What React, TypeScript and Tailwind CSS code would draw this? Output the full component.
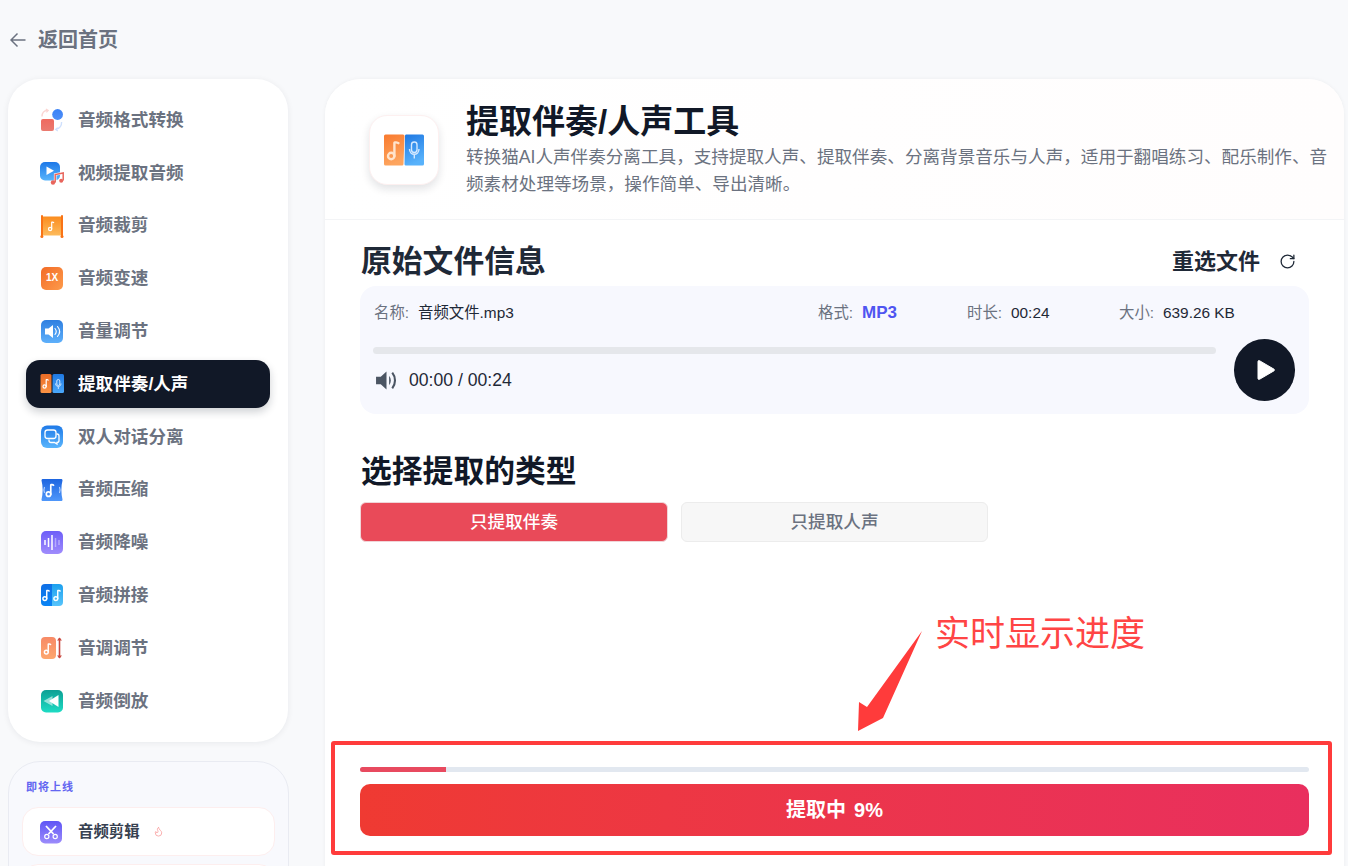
import React from "react";
import { RotateCw, Flame } from "lucide-react";

const FONT = '"Liberation Sans","Noto Sans CJK SC",sans-serif';

function Grad({ id, a, b, x2 = 0, y2 = 1 }: { id: string; a: string; b: string; x2?: number; y2?: number }) {
  return (
    <linearGradient id={id} x1="0" y1="0" x2={x2} y2={y2}>
      <stop offset="0" stopColor={a} />
      <stop offset="1" stopColor={b} />
    </linearGradient>
  );
}

function Note({ x, y, s = 1, c = "#fff" }: { x: number; y: number; s?: number; c?: string }) {
  return (
    <g transform={`translate(${x} ${y}) scale(${s})`} fill="none" stroke={c} strokeWidth="1.2" strokeLinecap="round">
      <circle cx="-1.4" cy="3" r="1.6" />
      <path d="M0.2 3V-3.6c0-.4 1.6-.2 2 .2" />
    </g>
  );
}

function Svg({ children }: { children: React.ReactNode }) {
  return (
    <svg width="24" height="24" viewBox="0 0 24 24" className="shrink-0">
      {children}
    </svg>
  );
}

const icons: Record<string, React.ReactNode> = {
  format: (
    <Svg>
      <defs>
        <Grad id="f1" a="#ef6a5f" b="#ea7b70" />
        <Grad id="f2" a="#3b82f6" b="#4f8ff7" />
      </defs>
      <rect x="1" y="11" width="13" height="12" rx="2" fill="url(#f1)" />
      <circle cx="17.6" cy="6.5" r="5.4" fill="url(#f2)" />
      <path d="M2 8.5C2 5 4 2.6 7.5 2.4" fill="none" stroke="#fbd5d2" strokeWidth="1.4" />
      <path d="M5.8 1l2.4 1.4L6.4 4.4" fill="none" stroke="#fbd5d2" strokeWidth="1.2" />
      <path d="M21.6 14c0 4-2 6.6-5.6 7.4" fill="none" stroke="#cfe0fd" strokeWidth="1.4" />
      <path d="M17.6 19.6l-2 1.9 2.2 1.4" fill="none" stroke="#cfe0fd" strokeWidth="1.2" />
    </Svg>
  ),
  video: (
    <Svg>
      <defs>
        <Grad id="v1" a="#1d78e8" b="#58b4fb" />
      </defs>
      <rect x="0" y="1" width="20" height="18.500" rx="5" fill="url(#v1)" />
      <path d="M6.500 5.500v8.500l7.500-4.200z" fill="#fff" />
      <path d="M15.200 21.500v-8l8-1.500v7.500" fill="none" stroke="#fff" strokeWidth="2.600" />
      <path d="M15.200 21.500v-8l8-1.500v7.500" fill="none" stroke="#e8655c" strokeWidth="1.500" />
      <circle cx="13" cy="21.500" r="2.200" fill="#e8655c" />
      <circle cx="21.200" cy="19.700" r="2" fill="#e8655c" />
    </Svg>
  ),
  crop: (
    <Svg>
      <defs>
        <Grad id="c1" a="#fb8c1e" b="#fdbb5c" />
      </defs>
      <rect x="1.500" y="2.500" width="21" height="19" fill="url(#c1)" />
      <rect x="1" y="1" width="2" height="22" rx="1" fill="#f97316" />
      <rect x="21" y="1" width="2" height="22" rx="1" fill="#f97316" />
      <circle cx="1.900" cy="22.500" r="1.500" fill="#f97316" />
      <circle cx="22" cy="22.500" r="1.500" fill="#f97316" />
      <Note x={11.500} y={12} />
    </Svg>
  ),
  volume: (
    <Svg>
      <defs>
        <Grad id="o1" a="#2f7fe0" b="#5eb0fb" />
      </defs>
      <rect x="1" y="1" width="22" height="23" rx="5" fill="url(#o1)" />
      <path d="M5 9.500h3.500L13 6v13l-4.500-3.500H5z" fill="#fff" />
      <path d="M15 9.500c1.500 1.800 1.500 4.200 0 6M17.500 7.500c2.600 3 2.600 7 0 10" fill="none" stroke="#fff" strokeWidth="1.100" strokeLinecap="round" />
    </Svg>
  ),
  sep: (
    <Svg>
      <defs>
        <Grad id="s1" a="#ea6c26" b="#fb9344" />
        <Grad id="s2" a="#1f78e2" b="#4aa8fb" />
      </defs>
      <rect x="0.500" y="2" width="11" height="19" rx="1.500" fill="url(#s1)" />
      <rect x="12.500" y="2" width="11.500" height="19" rx="1.500" fill="url(#s2)" />
      <Note x={6} y={11.500} />
      <rect x="16.800" y="7.500" width="3" height="6" rx="1.500" fill="none" stroke="#cfe6ff" strokeWidth="1" />
      <path d="M15.500 11.500c0 4 5.500 4 5.500 0M18.300 15v2" fill="none" stroke="#cfe6ff" strokeWidth="1" />
    </Svg>
  ),
  chat: (
    <Svg>
      <defs>
        <Grad id="h1" a="#1f7ae8" b="#5ab5fc" />
      </defs>
      <rect x="1" y="0.500" width="22" height="22.500" rx="6" fill="url(#h1)" />
      <rect x="5" y="5" width="11" height="8.500" rx="2.500" fill="none" stroke="#fff" strokeWidth="1.300" />
      <path d="M16.500 9h.5a2 2 0 0 1 2 2v4.500a2 2 0 0 1-2 2v1.500l-2.500-1.500H11a2 2 0 0 1-2-2v-1" fill="none" stroke="#fff" strokeWidth="1.300" />
    </Svg>
  ),
  compress: (
    <Svg>
      <defs>
        <Grad id="p1" a="#1d65e0" b="#4f97fa" />
      </defs>
      <path d="M3 1h18c1 0 1.500.5 1.500 1.500-1.500 5.500-1.500 13.500 0 19 0 1-.5 1.500-1.500 1.500H3c-1 0-1.500-.5-1.500-1.500 1.500-5.500 1.500-13.500 0-19C1.500 1.500 2 1 3 1z" fill="url(#p1)" />
      <Note x={10.500} y={12} s={1.400} />
      <path d="M4.500 9c-.8 2-.8 4 0 6M19.500 9c.8 2 .8 4 0 6" fill="none" stroke="#bcd6ff" strokeWidth="1.100" />
    </Svg>
  ),
  noise: (
    <Svg>
      <defs>
        <Grad id="n1" a="#6d5ef8" b="#a08cfc" />
      </defs>
      <rect x="1" y="1" width="22" height="23" rx="5" fill="url(#n1)" />
      <g stroke="#fff" strokeWidth="1.500">
        <path d="M5 10v5M8.500 8v9M12 5v15" />
        <path d="M15.500 8v9M19 10v5" opacity=".4" />
      </g>
    </Svg>
  ),
  join: (
    <Svg>
      <defs>
        <Grad id="j1" a="#0f6fe6" b="#0a84f4" />
        <Grad id="j2" a="#1ca0ee" b="#58c4fb" />
      </defs>
      <path d="M5 1h7v22H5a4 4 0 0 1-4-4V5a4 4 0 0 1 4-4z" fill="url(#j1)" />
      <path d="M12 1h7a4 4 0 0 1 4 4v14a4 4 0 0 1-4 4h-7z" fill="url(#j2)" />
      <Note x={6.500} y={12} s={1.200} />
      <Note x={17.500} y={12} s={1.200} />
    </Svg>
  ),
  pitch: (
    <Svg>
      <defs>
        <Grad id="t1" a="#f78a66" b="#fda76e" />
      </defs>
      <rect x="1" y="1" width="15" height="22" rx="4" fill="url(#t1)" />
      <Note x={8} y={12.500} s={1.200} />
      <path d="M19.500 2v20" stroke="#c9483f" strokeWidth="1.600" />
      <path d="M17 4.500l2.500-3 2.500 3zM17 19.500l2.500 3 2.500-3z" fill="#c9483f" />
    </Svg>
  ),
  reverse: (
    <Svg>
      <defs>
        <Grad id="r1" a="#0d9f94" b="#1edcc4" />
      </defs>
      <rect x="1" y="1" width="22" height="22.500" rx="5" fill="url(#r1)" />
      <path d="M3.500 12l9-5v10z" fill="#fff" opacity=".55" />
      <path d="M9 12l9.500-6v12z" fill="#fff" />
    </Svg>
  ),
};

function SpeedIcon() {
  return (
    <div className="w-[22px] h-[23px] mx-px rounded-[5px] bg-gradient-to-br from-[#f26b26] to-[#fd9a4a] flex items-center justify-center text-white text-[10px] font-bold leading-none shrink-0">
      1X
    </div>
  );
}

const menu: { k: string; t: string; on?: boolean }[] = [
  { k: "format", t: "音频格式转换" },
  { k: "video", t: "视频提取音频" },
  { k: "crop", t: "音频裁剪" },
  { k: "speed", t: "音频变速" },
  { k: "volume", t: "音量调节" },
  { k: "sep", t: "提取伴奏/人声", on: true },
  { k: "chat", t: "双人对话分离" },
  { k: "compress", t: "音频压缩" },
  { k: "noise", t: "音频降噪" },
  { k: "join", t: "音频拼接" },
  { k: "pitch", t: "音调调节" },
  { k: "reverse", t: "音频倒放" },
];

function Meta({ w, label, children }: { w: string; label: string; children: React.ReactNode }) {
  return (
    <div className={`${w} flex items-center text-[15.400px] leading-5`}>
      <span className="w-[44px] text-[#6b7280] shrink-0">{label}:</span>
      {children}
    </div>
  );
}

export default function App() {
  return (
    <div className="relative w-[1348px] h-[866px] overflow-hidden bg-[#f8f9fb]" style={{ fontFamily: FONT }}>
      <div className="h-[79px] flex items-center pl-[10px] gap-[12px] text-[#6b7280]">
        <svg width="16" height="16" viewBox="0 0 16 16" fill="none" stroke="currentColor" strokeWidth="1.500" className="shrink-0">
          <path d="M15.500 8H1M7.500 1.500L1 8l6.500 6.500" />
        </svg>
        <span className="text-[20px] font-semibold">返回首页</span>
      </div>

      <div className="flex items-start pl-2">
        <aside className="w-[281px] shrink-0">
          <nav className="w-[280px] bg-white rounded-[32px] shadow-[0_1px_6px_rgba(17,24,39,0.07)] h-[663px] pt-[17px] px-[18px] flex flex-col gap-[4.800px]">
            {menu.map((m) => (
              <div
                key={m.k}
                className={`h-[48px] shrink-0 rounded-[14px] pl-[14px] flex items-center gap-[14px] text-[17.600px] font-semibold ${
                  m.on ? "bg-[#111827] text-white shadow-[0_4px_8px_rgba(17,24,39,0.2)]" : "text-[#6b7280]"
                }`}
              >
                {m.k === "speed" ? <SpeedIcon /> : icons[m.k]}
                <span>{m.t}</span>
              </div>
            ))}
          </nav>

          <div className="mt-[19px] h-[200px] bg-[#f8f9fd] border border-[#e9ebf2] rounded-[32px] px-[13px] pt-[17px]">
            <div className="text-[11px] leading-4 font-semibold tracking-[1px] text-[#6366f1] pl-[4px]">即将上线</div>
            <div className="mt-[12px] h-[49px] bg-white border border-[#fdeeee] rounded-[16px] pl-[16px] flex items-center">
              <svg width="24" height="24" viewBox="0 0 24 24" className="shrink-0 mr-[15px]">
                <defs>
                  <Grad id="x1" a="#5f55f5" b="#9c8cfb" />
                </defs>
                <rect x="1" y="1" width="22" height="22.500" rx="5" fill="url(#x1)" />
                <path d="M7 6l7.500 8M17 6l-7.500 8" stroke="#fff" strokeWidth="1.800" />
                <circle cx="7.800" cy="16.500" r="2.100" fill="none" stroke="#fff" strokeWidth="1.200" />
                <circle cx="16.200" cy="16.500" r="2.100" fill="none" stroke="#fff" strokeWidth="1.200" />
              </svg>
              <span className="text-[15.400px] font-semibold text-[#374151]">音频剪辑</span>
              <Flame size={11} className="text-[#f9a8a8] ml-[13px]" />
            </div>
            <div className="mt-[8px] h-[49px] bg-white border border-[#fdeeee] rounded-[16px]" />
          </div>
        </aside>

        <main className="ml-[36px] w-[1019px] h-[800px] bg-white rounded-t-[36px] shadow-[0_0_4px_rgba(17,24,39,0.05)]">
          <header className="h-[141px] border-b border-[#f3f4f6] rounded-t-[36px] bg-gradient-to-r from-white to-[#fffdfd] flex pl-[44px]">
            <div className="mt-[36px] w-[70px] h-[70px] rounded-[18px] bg-white border border-[#fdf0f0] shadow-[0_4px_8px_rgba(17,24,39,0.12)] flex items-center justify-center shrink-0">
              <svg width="40" height="32" viewBox="0 0 40 32">
                <defs>
                  <Grad id="h2" a="#f97a2e" b="#fda55f" x2={0.3} />
                  <Grad id="h3" a="#1f78e2" b="#58b2fb" x2={0.3} />
                </defs>
                <path d="M1.500 0.500h17.500a1.500 1.500 0 0 1 1.500 1.500L19.500 30a1.500 1.500 0 0 1-1.500 1.500H1.500A1.500 1.500 0 0 1 0 30V2A1.500 1.500 0 0 1 1.500.5z" fill="url(#h2)" />
                <path d="M22 0.500h16.500a1.500 1.500 0 0 1 1.500 1.500V30a1.500 1.500 0 0 1-1.500 1.500H21.500a1.500 1.500 0 0 1-1-1.500L21 2a1.500 1.500 0 0 1 1-1.500z" fill="url(#h3)" />
                <Note x={10} y={16} s={2} c="#ffe4cc" />
                <rect x="27.500" y="8" width="5.500" height="10.500" rx="2.700" fill="none" stroke="#d4e9ff" strokeWidth="1.400" />
                <path d="M25.500 15c0 7 9.500 7 9.500 0M30.300 20.500v4" fill="none" stroke="#d4e9ff" strokeWidth="1.400" />
              </svg>
            </div>
            <div className="ml-[27px] pt-[22px] w-[864px]">
              <h1 className="text-[33px] leading-[42px] font-bold text-[#111827]">提取伴奏/人声工具</h1>
              <p className="text-[17.600px] leading-[27px] text-[#6b7280] mt-[1px]">
                转换猫AI人声伴奏分离工具，支持提取人声、提取伴奏、分离背景音乐与人声，适用于翻唱练习、配乐制作、音频素材处理等场景，操作简单、导出清晰。
              </p>
            </div>
          </header>

          <section className="px-[35px]">
            <div className="h-[66px] flex items-center justify-between pr-[13px] pt-[20px] pb-[2px]">
              <h2 className="text-[30.800px] font-bold text-[#1f2937] pl-px">原始文件信息</h2>
              <div className="flex items-center gap-[19px] -mt-[2px]">
                <span className="text-[22px] font-semibold text-[#1f2937]">重选文件</span>
                <RotateCw size={17} strokeWidth={1.800} className="text-[#1f2937]" />
              </div>
            </div>

            <div className="h-[128px] w-[949px] bg-[#f7f8fe] rounded-[16px] px-[14px] flex flex-col relative">
              <div className="flex items-center pt-[17px] h-[36px]">
                <Meta w="w-[444px]" label="名称">
                  <span className="text-[#1f2937]">音频文件.mp3</span>
                </Meta>
                <Meta w="w-[149px]" label="格式">
                  <span className="text-[17px] font-bold text-[#4f55f1]">MP3</span>
                </Meta>
                <Meta w="w-[152px]" label="时长">
                  <span className="text-[#1f2937]">00:24</span>
                </Meta>
                <Meta w="w-[140px]" label="大小">
                  <span className="text-[#1f2937]">639.26 KB</span>
                </Meta>
              </div>
              <div className="mt-[25px] w-[843px] h-[7px] rounded-full bg-[#e5e7eb] -ml-px" />
              <div className="flex items-center mt-[14px] h-[24px] gap-[11px]">
                <svg width="23" height="21" viewBox="0 0 22 20" className="ml-px">
                  <path d="M1 6.500h4.500L11 1.500v17l-5.500-5H1z" fill="#4b5563" />
                  <path d="M13.500 5.500c2.200 2.700 2.200 6.300 0 9z" fill="#4b5563" />
                  <path d="M16.500 2.500c3.500 4.300 3.500 10.700 0 15" fill="none" stroke="#4b5563" strokeWidth="2" />
                </svg>
                <span className="text-[17.600px] text-[#1f2937]">00:00 / 00:24</span>
              </div>
              <button className="absolute left-[874px] top-[53px] w-[61px] h-[62px] rounded-full bg-[#111827] flex items-center justify-center">
                <svg width="20" height="22" viewBox="0 0 20 22" className="ml-[2px]">
                  <path d="M2 2.500v17c0 .8.800 1.200 1.500.8l14.500-8.500c.6-.4.600-1.200 0-1.600L3.500 1.700C2.800 1.300 2 1.700 2 2.500z" fill="#fff" stroke="#fff" strokeWidth="1" />
                </svg>
              </button>
            </div>

            <h2 className="mt-[37px] text-[30.800px] leading-[42px] font-bold text-[#111827] pl-px">选择提取的类型</h2>
            <div className="mt-[9px] flex gap-[13px]">
              <button className="w-[308px] h-[40px] rounded-[6px] bg-[#e94a59] border border-[#f0d5d8] text-white text-[17.600px] font-medium">
                只提取伴奏
              </button>
              <button className="w-[307px] h-[40px] rounded-[6px] bg-[#f7f7f7] border border-[#ececec] text-[#6b7280] text-[17.600px] font-medium">
                只提取人声
              </button>
            </div>

            <div className="mt-[225px] h-[5px] rounded-full bg-[#e2e8f0] overflow-hidden w-[949px]">
              <div className="h-full w-[86px] bg-[#e84a5f]" />
            </div>
            <button className="mt-[12px] w-[949px] h-[52px] rounded-[10px] bg-gradient-to-r from-[#ef3a32] to-[#e92f5e] text-white text-[20px] font-semibold flex items-center justify-center gap-[8px]">
              <span>提取中</span>
              <span>9%</span>
            </button>
          </section>
        </main>
      </div>

      <div className="absolute left-[331px] top-[741px] w-[1001px] h-[114px] border-[4px] border-[#ff3b3b] rounded-[3px]" />
      <svg className="absolute left-[850px] top-[625px]" width="80" height="112" viewBox="850 625 80 112">
        <polygon points="922,631 883,718 858,731 859,702 867,707" fill="#ff3b3b" />
      </svg>
      <div className="absolute left-[935px] top-[610px] text-[35px] leading-[48px] text-[#ff4545] font-normal">
        实时显示进度
      </div>
    </div>
  );
}
